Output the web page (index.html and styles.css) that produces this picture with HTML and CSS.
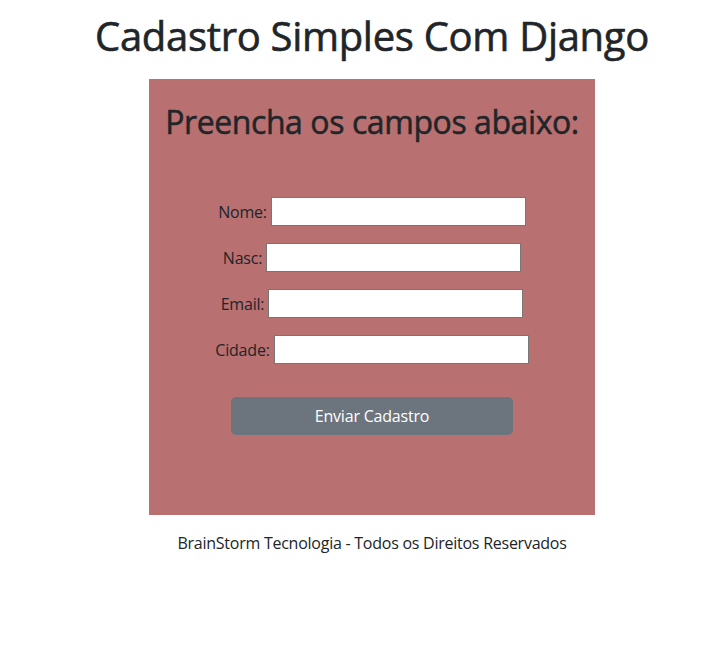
FILE: index.html
```html
<!DOCTYPE html>
<html lang="pt-br">

<head>
    <meta charset="UTF-8">
    <title>Cadastro Simples Com Django</title>

    <link rel="stylesheet" href="styles.css">
</head>

<body>

    <main class="pagina">

        <h1>Cadastro Simples Com Django</h1>

        <section class="cartao">
            <h2>Preencha os campos abaixo:</h2>

            <form class="formulario">
                <div class="linha">
                    <label for="nome">Nome:</label>
                    <input type="text" id="nome" name="nome">
                </div>
                <div class="linha">
                    <label for="nasc">Nasc:</label>
                    <input type="text" id="nasc" name="nasc">
                </div>
                <div class="linha">
                    <label for="email">Email:</label>
                    <input type="text" id="email" name="email">
                </div>
                <div class="linha">
                    <label for="cidade">Cidade:</label>
                    <input type="text" id="cidade" name="cidade">
                </div>

                <button type="button" class="enviar">Enviar Cadastro</button>
            </form>
        </section>

        <footer class="rodape">BrainStorm Tecnologia - Todos os Direitos Reservados</footer>

    </main>

</body>

</html>
```

FILE: styles.css
```css
body {
    margin: 0;
    font-family: "Open Sans", "Noto Sans", sans-serif;
    color: #212529;
    background: #fff;
}

.pagina {
    padding-left: 40px;
    display: flex;
    flex-direction: column;
    align-items: center;
}

h1 {
    font-size: 40px;
    font-weight: 500;
    line-height: 1.2;
    letter-spacing: -0.3px;
    -webkit-text-stroke: 0.6px #212529;
    margin: 12px 0 19px;
}

.cartao {
    width: 446px;
    height: 436px;
    box-sizing: border-box;
    background-color: #b87070;
    padding-top: 24px;
}

.cartao h2 {
    font-size: 32px;
    font-weight: 500;
    line-height: 1.2;
    letter-spacing: -0.42px;
    -webkit-text-stroke: 0.5px #212529;
    text-align: center;
    margin: 0 0 56px;
}

.formulario {
    display: flex;
    flex-direction: column;
    align-items: center;
    gap: 17px;
}

.linha {
    display: flex;
    align-items: center;
    gap: 4px;
    font-size: 16px;
    letter-spacing: -0.2px;
}

.linha input {
    width: 255px;
    height: 29px;
    box-sizing: border-box;
    border: 1px solid #767676;
    background: #fff;
    padding: 1px 2px;
}

.enviar {
    margin-top: 16px;
    width: 282px;
    height: 38px;
    border: none;
    border-radius: 5px;
    background-color: #6c757d;
    color: #fff;
    font-family: inherit;
    font-size: 16px;
    letter-spacing: -0.2px;
}

.rodape {
    font-size: 16px;
    letter-spacing: -0.25px;
    margin-top: 17px;
}
```
